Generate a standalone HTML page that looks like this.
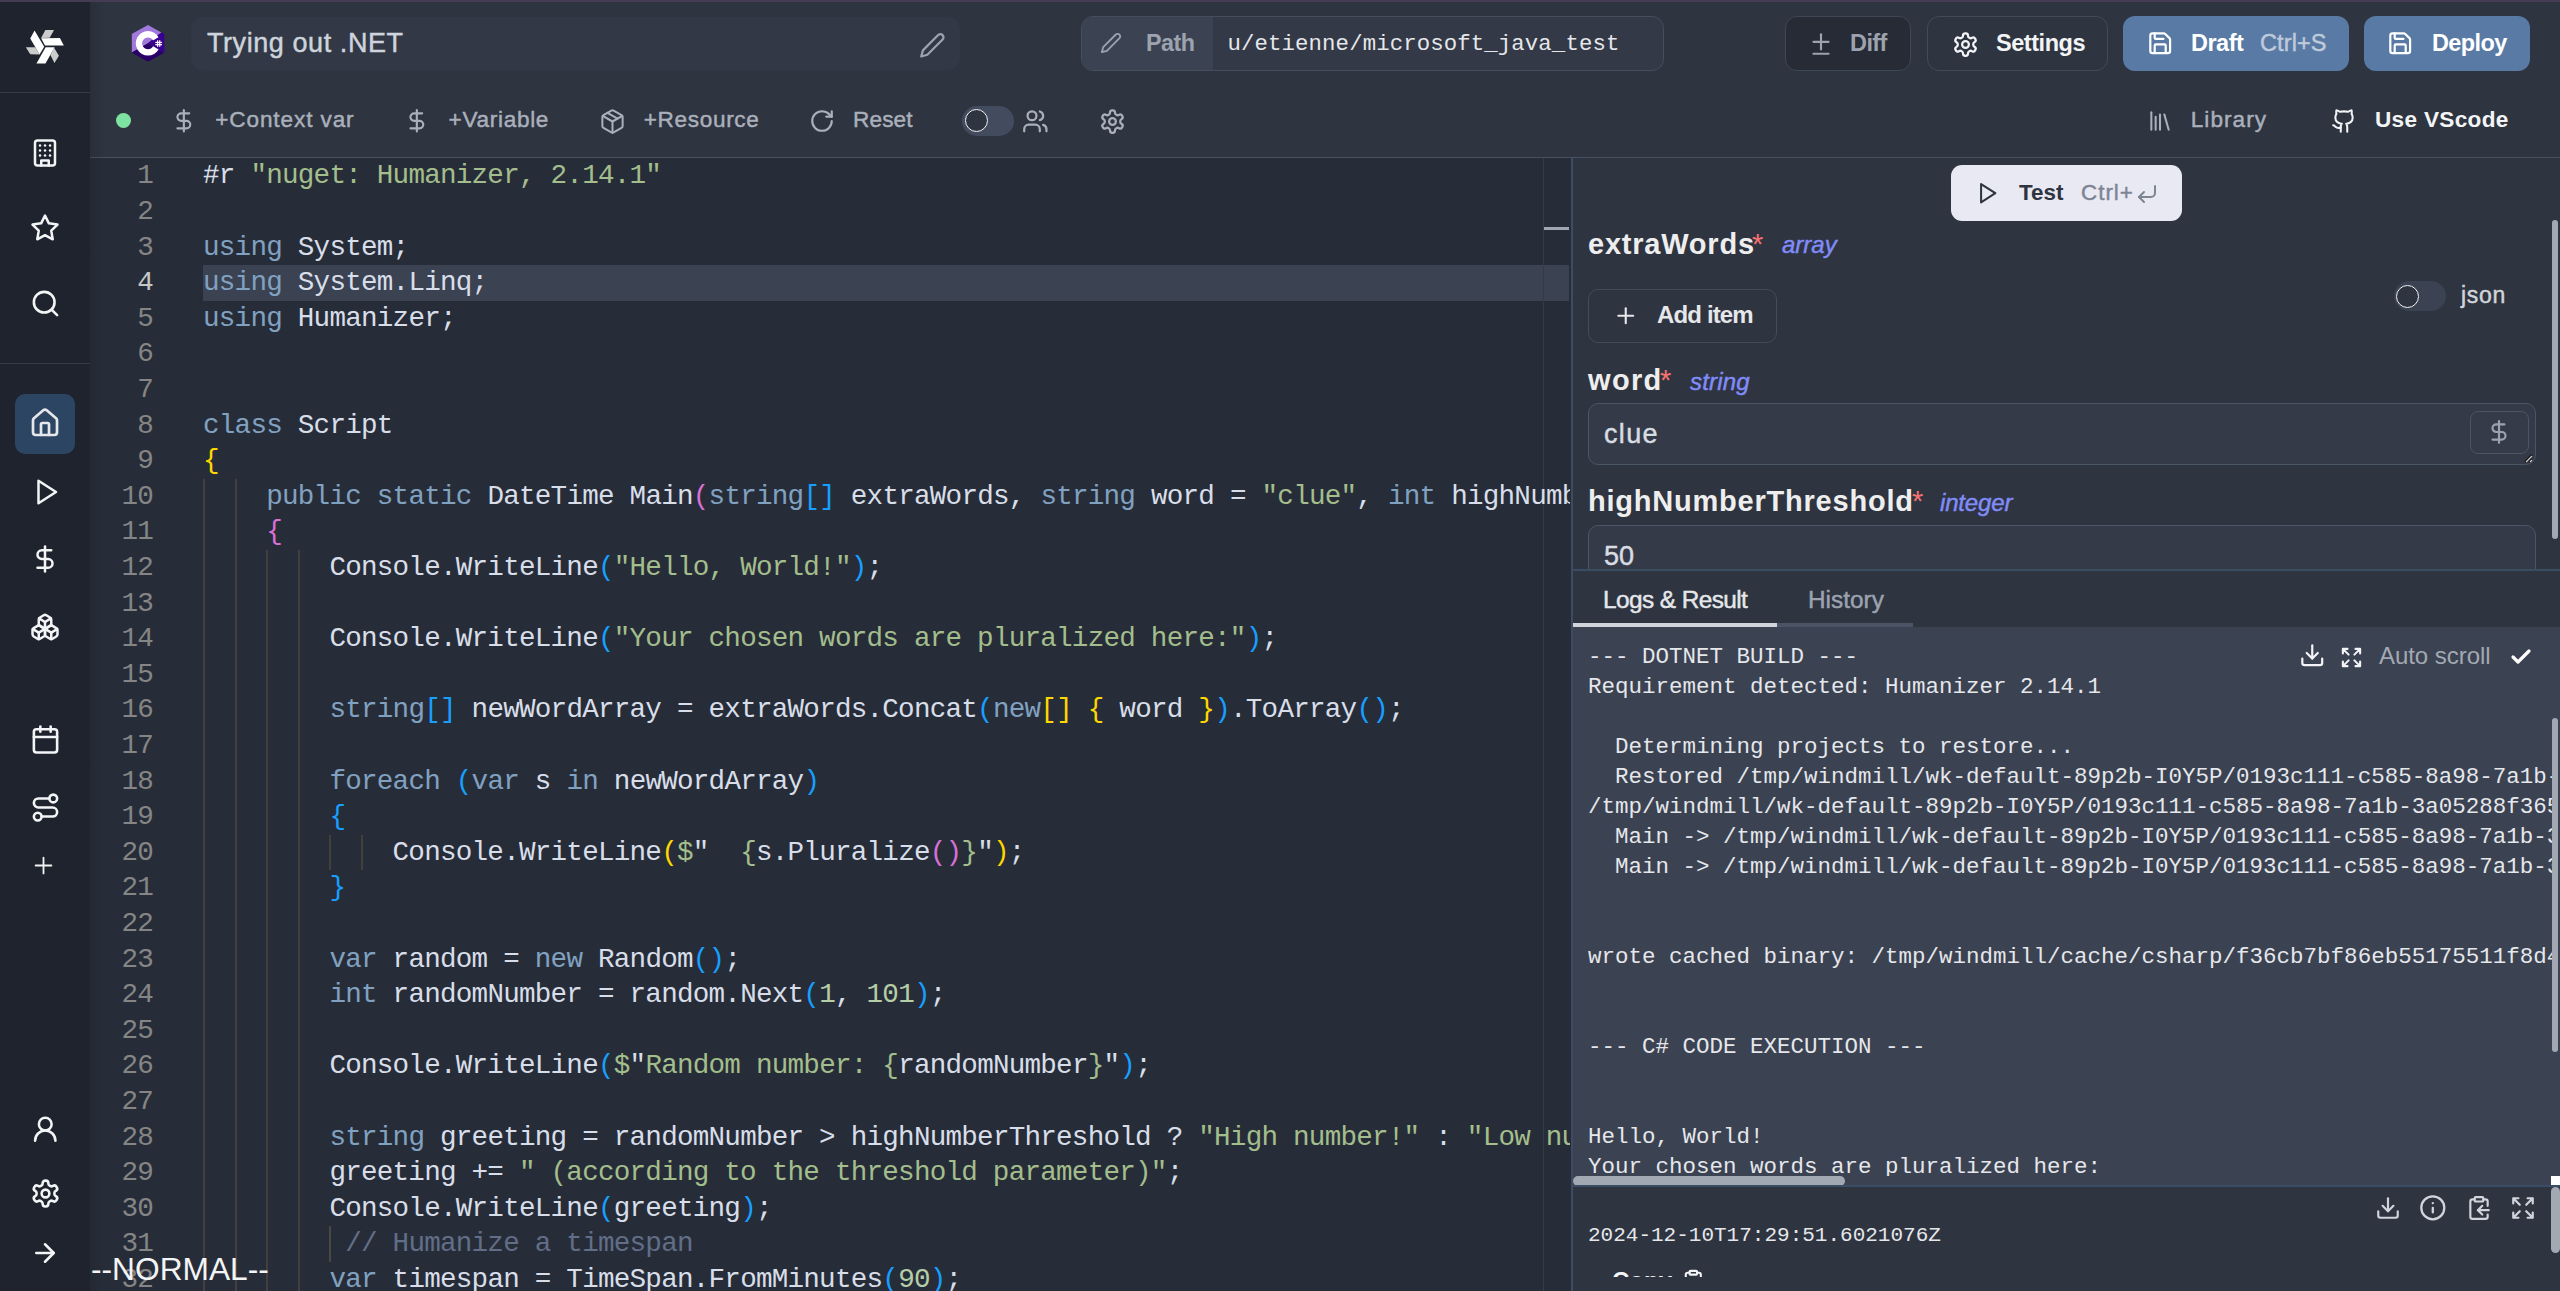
<!DOCTYPE html>
<html><head><meta charset="utf-8"><title>Windmill</title><style>
*{margin:0;padding:0;box-sizing:content-box}
html,body{width:2560px;height:1291px;overflow:hidden;background:#272d38}
body{position:relative;font-family:'Liberation Sans', sans-serif}
body div, body svg, body span.t{position:absolute}
.ln{left:90px;width:63px;text-align:right;font-family:'Liberation Mono', monospace;font-size:27.600px;letter-spacing:-0.762px;line-height:35.6px;white-space:pre}
.cl{left:203px;font-family:'Liberation Mono', monospace;font-size:27.600px;letter-spacing:-0.762px;line-height:35.6px;white-space:pre;width:1367px;overflow:hidden;height:35.6px}
.lg{left:15px;font-family:'Liberation Mono', monospace;font-size:22.5px;line-height:26.24px;white-space:pre;color:#e5e7eb}
</style></head>
<body>
<div style="left:0px;top:0px;width:90px;height:1291px;background:#1f232d"></div>
<div style="left:90px;top:0px;width:2470px;height:158px;background:#2e3440"></div>
<div style="left:0px;top:0px;width:2560px;height:2px;background:#453b52"></div>
<div style="left:90px;top:157px;width:2470px;height:1px;background:#465161"></div>
<div style="left:0px;top:92px;width:90px;height:1px;background:#343d4b"></div>
<div style="left:0px;top:363px;width:90px;height:1px;background:#343d4b"></div>
<div style="left:90px;top:158px;width:1481px;height:1133px;background:#272d38"></div>
<div style="left:1571px;top:158px;width:2px;height:1133px;background:#3b4d64"></div>
<div style="left:1573px;top:158px;width:987px;height:412px;background:#2e3440"></div>
<div style="left:90px;top:2px;width:14px;height:1289px;background:linear-gradient(to right, rgba(0,0,0,0.10), rgba(0,0,0,0))"></div>
<svg style="left:20px;top:21px;width:50px;height:50px" viewBox="0 0 1291 1291">
<g fill="#cccccc">
<polygon points="150,675 390,675 505,865 265,858"/>
<polygon points="655,235 878,235 768,432 545,442"/>
<polygon points="880,690 1005,895 890,1082 785,880"/>
</g>
<g fill="#ffffff">
<polygon points="375,245 625,667 505,865 265,450"/>
<polygon points="545,445 1030,440 1132,635 645,635"/>
<polygon points="662,675 892,675 658,1100 425,1100"/>
</g></svg>
<div style="left:15px;top:394px;width:60px;height:60px;background:#2c4563;border-radius:10px"></div>
<svg style="left:30.00px;top:138.00px;width:30px;height:30px;" viewBox="0 0 24 24" fill="none" stroke="#f3f4f6" stroke-width="2" stroke-linecap="round" stroke-linejoin="round"><rect width="16" height="20" x="4" y="2" rx="2" ry="2"/><path d="M9 22v-4h6v4"/><path d="M8 6h.01"/><path d="M16 6h.01"/><path d="M12 6h.01"/><path d="M12 10h.01"/><path d="M12 14h.01"/><path d="M16 10h.01"/><path d="M16 14h.01"/><path d="M8 10h.01"/><path d="M8 14h.01"/></svg>
<svg style="left:30.00px;top:213.00px;width:30px;height:30px;" viewBox="0 0 24 24" fill="none" stroke="#f3f4f6" stroke-width="2" stroke-linecap="round" stroke-linejoin="round"><polygon points="12 2 15.09 8.26 22 9.27 17 14.14 18.18 21.02 12 17.77 5.82 21.02 7 14.14 2 9.27 8.91 8.26 12 2"/></svg>
<svg style="left:29.50px;top:287.50px;width:31px;height:31px;" viewBox="0 0 24 24" fill="none" stroke="#f3f4f6" stroke-width="2" stroke-linecap="round" stroke-linejoin="round"><circle cx="11" cy="11" r="8"/><path d="m21 21-4.3-4.3"/></svg>
<svg style="left:29.00px;top:407.00px;width:32px;height:32px;" viewBox="0 0 24 24" fill="none" stroke="#e5e7eb" stroke-width="2" stroke-linecap="round" stroke-linejoin="round"><path d="M15 21v-8a1 1 0 0 0-1-1h-4a1 1 0 0 0-1 1v8"/><path d="M3 10a2 2 0 0 1 .709-1.528l7-5.999a2 2 0 0 1 2.582 0l7 5.999A2 2 0 0 1 21 10v9a2 2 0 0 1-2 2H5a2 2 0 0 1-2-2z"/></svg>
<svg style="left:31.00px;top:477.00px;width:30px;height:30px;" viewBox="0 0 24 24" fill="none" stroke="#f3f4f6" stroke-width="2" stroke-linecap="round" stroke-linejoin="round"><polygon points="6 3 20 12 6 21 6 3"/></svg>
<svg style="left:30.00px;top:544.00px;width:30px;height:30px;" viewBox="0 0 24 24" fill="none" stroke="#f3f4f6" stroke-width="2" stroke-linecap="round" stroke-linejoin="round"><line x1="12" x2="12" y1="2" y2="22"/><path d="M17 5H9.5a3.5 3.5 0 0 0 0 7h5a3.5 3.5 0 0 1 0 7H6"/></svg>
<svg style="left:30.00px;top:612.00px;width:30px;height:30px;" viewBox="0 0 24 24" fill="none" stroke="#f3f4f6" stroke-width="2" stroke-linecap="round" stroke-linejoin="round"><path d="M2.97 12.92A2 2 0 0 0 2 14.63v3.24a2 2 0 0 0 .97 1.71l3 1.8a2 2 0 0 0 2.06 0L12 19v-5.5l-5-3-4.03 2.42Z"/><path d="m7 16.5-4.74-2.85"/><path d="m7 16.5 5-3"/><path d="M7 16.5v5.17"/><path d="M12 13.5V19l3.97 2.38a2 2 0 0 0 2.06 0l3-1.8a2 2 0 0 0 .97-1.71v-3.24a2 2 0 0 0-.97-1.71L17 10.5l-5 3Z"/><path d="m17 16.5-5-3"/><path d="m17 16.5 4.74-2.85"/><path d="M17 16.5v5.17"/><path d="M7.970 4.42A2 2 0 0 0 7 6.13v4.37l5 3 5-3V6.13a2 2 0 0 0-.97-1.71l-3-1.8a2 2 0 0 0-2.06 0l-3 1.8Z"/><path d="M12 8 7.26 5.15"/><path d="m12 8 4.74-2.85"/><path d="M12 13.5V8"/></svg>
<svg style="left:29.50px;top:724.00px;width:31px;height:31px;" viewBox="0 0 24 24" fill="none" stroke="#f3f4f6" stroke-width="2" stroke-linecap="round" stroke-linejoin="round"><path d="M8 2v4"/><path d="M16 2v4"/><rect width="18" height="18" x="3" y="4" rx="2"/><path d="M3 10h18"/></svg>
<svg style="left:29.50px;top:791.50px;width:31px;height:31px;" viewBox="0 0 24 24" fill="none" stroke="#f3f4f6" stroke-width="2" stroke-linecap="round" stroke-linejoin="round"><circle cx="6" cy="19" r="3"/><path d="M9 19h8.5a3.5 3.5 0 0 0 0-7h-11a3.5 3.5 0 0 1 0-7H15"/><circle cx="18" cy="5" r="3"/></svg>
<svg style="left:29.50px;top:851.50px;width:27px;height:27px;" viewBox="0 0 24 24" fill="none" stroke="#f3f4f6" stroke-width="1.6" stroke-linecap="round" stroke-linejoin="round"><path d="M5 12h14"/><path d="M12 5v14"/></svg>
<svg style="left:29.75px;top:1113.75px;width:30.5px;height:30.5px;" viewBox="0 0 24 24" fill="none" stroke="#f3f4f6" stroke-width="2" stroke-linecap="round" stroke-linejoin="round"><circle cx="12" cy="8" r="5"/><path d="M20 21a8 8 0 0 0-16 0"/></svg>
<svg style="left:29.50px;top:1177.50px;width:31px;height:31px;" viewBox="0 0 24 24" fill="none" stroke="#f3f4f6" stroke-width="2" stroke-linecap="round" stroke-linejoin="round"><path d="M12.22 2h-.44a2 2 0 0 0-2 2v.18a2 2 0 0 1-1 1.73l-.43.25a2 2 0 0 1-2 0l-.15-.08a2 2 0 0 0-2.73.73l-.22.38a2 2 0 0 0 .73 2.73l.15.1a2 2 0 0 1 1 1.72v.51a2 2 0 0 1-1 1.74l-.15.09a2 2 0 0 0-.73 2.73l.22.38a2 2 0 0 0 2.73.73l.15-.08a2 2 0 0 1 2 0l.43.25a2 2 0 0 1 1 1.73V20a2 2 0 0 0 2 2h.44a2 2 0 0 0 2-2v-.18a2 2 0 0 1 1-1.73l.43-.25a2 2 0 0 1 2 0l.15.08a2 2 0 0 0 2.73-.73l.22-.39a2 2 0 0 0-.73-2.73l-.15-.08a2 2 0 0 1-1-1.74v-.5a2 2 0 0 1 1-1.74l.15-.09a2 2 0 0 0 .73-2.73l-.22-.38a2 2 0 0 0-2.73-.73l-.15.08a2 2 0 0 1-2 0l-.43-.25a2 2 0 0 1-1-1.73V4a2 2 0 0 0-2-2z"/><circle cx="12" cy="12" r="3"/></svg>
<svg style="left:30.00px;top:1238.00px;width:30px;height:30px;" viewBox="0 0 24 24" fill="none" stroke="#f3f4f6" stroke-width="2" stroke-linecap="round" stroke-linejoin="round"><path d="M5 12h14"/><path d="m12 5 7 7-7 7"/></svg>
<svg style="left:125px;top:20px;width:46px;height:46px" viewBox="0 0 1291 1291">
<defs><clipPath id="hx"><polygon points="645,140 1110,400 1110,910 645,1170 185,915 185,395"/></clipPath>
<mask id="cm"><rect width="1291" height="1291" fill="#fff"/><polygon points="645,655 1300,280 1300,1030" fill="#000"/></mask></defs>
<g clip-path="url(#hx)">
<polygon points="0,0 1291,0 1291,130 645,655 0,1020" fill="#a179dc"/>
<polygon points="1291,130 1291,1050 645,655" fill="#390091"/>
<polygon points="0,1020 645,655 1291,1050 1291,1291 0,1291" fill="#280068"/>
</g>
<path d="M645,312 a343,343 0 1,0 0.1,0 Z M645,490 a165,165 0 1,1 -0.1,0 Z" fill="#fff" fill-rule="evenodd" mask="url(#cm)"/>
<g stroke="#fff" stroke-width="34"><line x1="915" y1="570" x2="915" y2="752"/><line x1="975" y1="570" x2="975" y2="752"/><line x1="850" y1="630" x2="1040" y2="630"/><line x1="850" y1="692" x2="1040" y2="692"/></g>
</svg>
<div style="left:191px;top:17px;width:769px;height:53px;background:#323846;border-radius:12px"></div>
<span class="t" id="title" style="left:207.00px;top:27.77px;font-size:27px;line-height:30.16px;color:#ced3dc;font-weight:400;font-family:'Liberation Sans', sans-serif;letter-spacing:0.571px;white-space:pre;-webkit-text-stroke:0.45px currentColor;">Trying out .NET</span>
<svg style="left:918.65px;top:31.65px;width:26.7px;height:26.7px;" viewBox="0 0 24 24" fill="none" stroke="#9ca3af" stroke-width="2" stroke-linecap="round" stroke-linejoin="round"><path d="M17 3a2.85 2.83 0 1 1 4 4L7.5 20.5 2 22l1.5-5.5Z"/></svg>
<div style="left:1081px;top:16px;width:583px;height:55px;background:#333946;border:1px solid #464e5c;border-radius:12px;box-sizing:border-box"></div>
<div style="left:1082px;top:17px;width:131px;height:53px;background:#3b4252;border-radius:11px 0 0 11px"></div>
<svg style="left:1100.00px;top:32.00px;width:22px;height:22px;" viewBox="0 0 24 24" fill="none" stroke="#9ca3af" stroke-width="2" stroke-linecap="round" stroke-linejoin="round"><path d="M17 3a2.85 2.83 0 1 1 4 4L7.5 20.5 2 22l1.5-5.5Z"/></svg>
<span class="t" id="path" style="left:1146.00px;top:30.41px;font-size:23.3px;line-height:26.03px;color:#9ca3af;font-weight:700;font-family:'Liberation Sans', sans-serif;letter-spacing:-0.533px;white-space:pre;">Path</span>
<span class="t" id="pathv" style="left:1227.50px;top:32.08px;font-size:22.35px;line-height:25.32px;color:#e5e7eb;font-weight:400;font-family:'Liberation Mono', monospace;letter-spacing:0.107px;white-space:pre;">u/etienne/microsoft_java_test</span>
<div style="left:1785px;top:16px;width:126px;height:55px;background:#262b35;border:1px solid #3f4655;border-radius:12px;box-sizing:border-box"></div>
<svg style="left:1808.00px;top:31.00px;width:26px;height:26px;" viewBox="0 0 24 24" fill="none" stroke="#9ca3af" stroke-width="2" stroke-linecap="round" stroke-linejoin="round"><path d="M12 3v14"/><path d="M5 10h14"/><path d="M5 21h14"/></svg>
<span class="t" id="diff" style="left:1850.00px;top:30.03px;font-size:23.5px;line-height:26.25px;color:#9ca3af;font-weight:700;font-family:'Liberation Sans', sans-serif;letter-spacing:-0.567px;white-space:pre;">Diff</span>
<div style="left:1927px;top:16px;width:181px;height:55px;border:1px solid #434a58;border-radius:12px;box-sizing:border-box"></div>
<svg style="left:1951.50px;top:30.50px;width:27px;height:27px;" viewBox="0 0 24 24" fill="none" stroke="#f3f4f6" stroke-width="2" stroke-linecap="round" stroke-linejoin="round"><path d="M12.22 2h-.44a2 2 0 0 0-2 2v.18a2 2 0 0 1-1 1.73l-.43.25a2 2 0 0 1-2 0l-.15-.08a2 2 0 0 0-2.73.73l-.22.38a2 2 0 0 0 .73 2.73l.15.1a2 2 0 0 1 1 1.72v.51a2 2 0 0 1-1 1.74l-.15.09a2 2 0 0 0-.73 2.73l.22.38a2 2 0 0 0 2.73.73l.15-.08a2 2 0 0 1 2 0l.43.25a2 2 0 0 1 1 1.73V20a2 2 0 0 0 2 2h.44a2 2 0 0 0 2-2v-.18a2 2 0 0 1 1-1.73l.43-.25a2 2 0 0 1 2 0l.15.08a2 2 0 0 0 2.73-.73l.22-.39a2 2 0 0 0-.73-2.73l-.15-.08a2 2 0 0 1-1-1.74v-.5a2 2 0 0 1 1-1.74l.15-.09a2 2 0 0 0 .73-2.73l-.22-.38a2 2 0 0 0-2.73-.73l-.15.08a2 2 0 0 1-2 0l-.43-.25a2 2 0 0 1-1-1.73V4a2 2 0 0 0-2-2z"/><circle cx="12" cy="12" r="3"/></svg>
<span class="t" id="settings" style="left:1996.00px;top:30.03px;font-size:23.5px;line-height:26.25px;color:#f3f4f6;font-weight:700;font-family:'Liberation Sans', sans-serif;letter-spacing:-0.457px;white-space:pre;">Settings</span>
<div style="left:2123px;top:16px;width:226px;height:55px;background:#587aa5;border-radius:12px"></div>
<svg style="left:2146.80px;top:30.30px;width:26.4px;height:26.4px;" viewBox="0 0 24 24" fill="none" stroke="#ffffff" stroke-width="2" stroke-linecap="round" stroke-linejoin="round"><path d="M15.2 3a2 2 0 0 1 1.4.6l3.8 3.8a2 2 0 0 1 .6 1.4V19a2 2 0 0 1-2 2H5a2 2 0 0 1-2-2V5a2 2 0 0 1 2-2z"/><path d="M17 21v-7a1 1 0 0 0-1-1H8a1 1 0 0 0-1 1v7"/><path d="M7 3v4a1 1 0 0 0 1 1h7"/></svg>
<span class="t" id="draft" style="left:2191.00px;top:30.03px;font-size:23.5px;line-height:26.25px;color:#ffffff;font-weight:700;font-family:'Liberation Sans', sans-serif;letter-spacing:-0.500px;white-space:pre;">Draft</span>
<span class="t" id="ctrls" style="left:2260.00px;top:30.03px;font-size:23.5px;line-height:26.25px;color:#bfcadb;font-weight:400;font-family:'Liberation Sans', sans-serif;letter-spacing:0.100px;white-space:pre;-webkit-text-stroke:0.45px currentColor;">Ctrl+S</span>
<div style="left:2364px;top:16px;width:166px;height:55px;background:#587aa5;border-radius:12px"></div>
<svg style="left:2386.80px;top:30.30px;width:26.4px;height:26.4px;" viewBox="0 0 24 24" fill="none" stroke="#ffffff" stroke-width="2" stroke-linecap="round" stroke-linejoin="round"><path d="M15.2 3a2 2 0 0 1 1.4.6l3.8 3.8a2 2 0 0 1 .6 1.4V19a2 2 0 0 1-2 2H5a2 2 0 0 1-2-2V5a2 2 0 0 1 2-2z"/><path d="M17 21v-7a1 1 0 0 0-1-1H8a1 1 0 0 0-1 1v7"/><path d="M7 3v4a1 1 0 0 0 1 1h7"/></svg>
<span class="t" id="deploy" style="left:2432.00px;top:30.03px;font-size:23.5px;line-height:26.25px;color:#ffffff;font-weight:700;font-family:'Liberation Sans', sans-serif;letter-spacing:-0.600px;white-space:pre;">Deploy</span>
<div style="left:116px;top:113px;width:15px;height:15px;border-radius:50%;background:#7ee2a2"></div>
<svg style="left:171.15px;top:108.15px;width:25.7px;height:25.7px;" viewBox="0 0 24 24" fill="none" stroke="#aab0bb" stroke-width="2" stroke-linecap="round" stroke-linejoin="round"><line x1="12" x2="12" y1="2" y2="22"/><path d="M17 5H9.5a3.5 3.5 0 0 0 0 7h5a3.5 3.5 0 0 1 0 7H6"/></svg>
<span class="t" id="ctx" style="left:215.20px;top:107.25px;font-size:22.6px;line-height:25.24px;color:#aab0bb;font-weight:400;font-family:'Liberation Sans', sans-serif;letter-spacing:0.882px;white-space:pre;-webkit-text-stroke:0.45px currentColor;">+Context var</span>
<svg style="left:404.15px;top:108.15px;width:25.7px;height:25.7px;" viewBox="0 0 24 24" fill="none" stroke="#aab0bb" stroke-width="2" stroke-linecap="round" stroke-linejoin="round"><line x1="12" x2="12" y1="2" y2="22"/><path d="M17 5H9.5a3.5 3.5 0 0 0 0 7h5a3.5 3.5 0 0 1 0 7H6"/></svg>
<span class="t" id="var" style="left:448.60px;top:107.25px;font-size:22.6px;line-height:25.24px;color:#aab0bb;font-weight:400;font-family:'Liberation Sans', sans-serif;letter-spacing:0.675px;white-space:pre;-webkit-text-stroke:0.45px currentColor;">+Variable</span>
<svg style="left:598.50px;top:107.50px;width:27px;height:27px;" viewBox="0 0 24 24" fill="none" stroke="#aab0bb" stroke-width="1.8" stroke-linecap="round" stroke-linejoin="round"><path d="m7.5 4.27 9 5.15"/><path d="M21 8a2 2 0 0 0-1-1.73l-7-4a2 2 0 0 0-2 0l-7 4A2 2 0 0 0 3 8v8a2 2 0 0 0 1 1.73l7 4a2 2 0 0 0 2 0l7-4A2 2 0 0 0 21 16Z"/><path d="m3.3 7 8.7 5 8.7-5"/><path d="M12 22V12"/></svg>
<span class="t" id="res" style="left:643.75px;top:107.25px;font-size:22.6px;line-height:25.24px;color:#aab0bb;font-weight:400;font-family:'Liberation Sans', sans-serif;letter-spacing:0.656px;white-space:pre;-webkit-text-stroke:0.45px currentColor;">+Resource</span>
<svg style="left:809.00px;top:108.00px;width:26px;height:26px;" viewBox="0 0 24 24" fill="none" stroke="#aab0bb" stroke-width="2" stroke-linecap="round" stroke-linejoin="round"><path d="M21 12a9 9 0 1 1-9-9c2.52 0 4.93 1 6.74 2.74L21 8"/><path d="M21 3v5h-5"/></svg>
<span class="t" id="reset" style="left:853.00px;top:107.25px;font-size:22.6px;line-height:25.24px;color:#aab0bb;font-weight:400;font-family:'Liberation Sans', sans-serif;letter-spacing:0.125px;white-space:pre;-webkit-text-stroke:0.45px currentColor;">Reset</span>
<div style="left:962px;top:106px;width:52px;height:30px;background:#434c5e;border-radius:15px"></div>
<div style="left:965px;top:109px;width:21px;height:21px;border-radius:50%;border:1.5px solid #f3f4f6;background:#2e3440"></div>
<svg style="left:1021.65px;top:107.65px;width:26.7px;height:26.7px;" viewBox="0 0 24 24" fill="none" stroke="#aab0bb" stroke-width="2" stroke-linecap="round" stroke-linejoin="round"><path d="M16 21v-2a4 4 0 0 0-4-4H6a4 4 0 0 0-4 4v2"/><circle cx="9" cy="7" r="4"/><path d="M22 21v-2a4 4 0 0 0-3-3.87"/><path d="M16 3.13a4 4 0 0 1 0 7.75"/></svg>
<svg style="left:1098.50px;top:107.50px;width:27px;height:27px;" viewBox="0 0 24 24" fill="none" stroke="#aab0bb" stroke-width="2" stroke-linecap="round" stroke-linejoin="round"><path d="M12.22 2h-.44a2 2 0 0 0-2 2v.18a2 2 0 0 1-1 1.73l-.43.25a2 2 0 0 1-2 0l-.15-.08a2 2 0 0 0-2.73.73l-.22.38a2 2 0 0 0 .73 2.73l.15.1a2 2 0 0 1 1 1.72v.51a2 2 0 0 1-1 1.74l-.15.09a2 2 0 0 0-.73 2.73l.22.38a2 2 0 0 0 2.73.73l.15-.08a2 2 0 0 1 2 0l.43.25a2 2 0 0 1 1 1.73V20a2 2 0 0 0 2 2h.44a2 2 0 0 0 2-2v-.18a2 2 0 0 1 1-1.73l.43-.25a2 2 0 0 1 2 0l.15.08a2 2 0 0 0 2.73-.73l.22-.39a2 2 0 0 0-.73-2.73l-.15-.08a2 2 0 0 1-1-1.74v-.5a2 2 0 0 1 1-1.74l.15-.09a2 2 0 0 0 .73-2.73l-.22-.38a2 2 0 0 0-2.73-.73l-.15.08a2 2 0 0 1-2 0l-.43-.25a2 2 0 0 1-1-1.73V4a2 2 0 0 0-2-2z"/><circle cx="12" cy="12" r="3"/></svg>
<svg style="left:2147.00px;top:108.00px;width:26px;height:26px;" viewBox="0 0 24 24" fill="none" stroke="#aab0bb" stroke-width="1.9" stroke-linecap="round" stroke-linejoin="round"><path d="m16 6 4 14"/><path d="M12 6v14"/><path d="M8 8v12"/><path d="M4 4v16"/></svg>
<span class="t" id="lib" style="left:2190.75px;top:107.25px;font-size:22.6px;line-height:25.24px;color:#aab0bb;font-weight:400;font-family:'Liberation Sans', sans-serif;letter-spacing:1.042px;white-space:pre;-webkit-text-stroke:0.45px currentColor;">Library</span>
<svg style="left:2330.50px;top:108.00px;width:26px;height:26px;" viewBox="0 0 24 24" fill="none" stroke="#f3f4f6" stroke-width="1.9" stroke-linecap="round" stroke-linejoin="round"><path d="M15 22v-4a4.8 4.8 0 0 0-1-3.5c3 0 6-2 6-5.5.08-1.25-.27-2.48-1-3.5.28-1.15.28-2.35 0-3.5 0 0-1 0-3 1.5-2.64-.5-5.36-.5-8 0C6 2 5 2 5 2c-.3 1.150-.3 2.35 0 3.5A5.403 5.403 0 0 0 4 9c0 3.5 3 5.5 6 5.5-.39.49-.68 1.05-.85 1.65-.17.6-.22 1.23-.15 1.850v4"/><path d="M9 18c-4.51 2-5-2-7-2"/></svg>
<span class="t" id="vscode" style="left:2375.00px;top:107.25px;font-size:22.6px;line-height:25.24px;color:#f3f4f6;font-weight:700;font-family:'Liberation Sans', sans-serif;letter-spacing:0.306px;white-space:pre;">Use VScode</span>
<div style="left:203px;top:265.20000000000005px;width:1366px;height:35.6px;background:#3b4252"></div>
<div style="left:1543px;top:158px;width:1px;height:1133px;background:#343a46"></div>
<div style="left:1544px;top:227px;width:25px;height:3px;background:#a0a7b4"></div>
<div style="left:203px;top:478.80000000000007px;width:1.5px;height:818.8000000000001px;background:#433f3d"></div>
<div style="left:235px;top:478.80000000000007px;width:1.5px;height:818.8000000000001px;background:#433f3d"></div>
<div style="left:266px;top:550.0px;width:1.5px;height:747.6px;background:#433f3d"></div>
<div style="left:298px;top:550.0px;width:1.5px;height:747.6px;background:#433f3d"></div>
<div style="left:329px;top:834.8px;width:1.5px;height:35.6px;background:#433f3d"></div>
<div style="left:361px;top:834.8px;width:1.5px;height:35.6px;background:#433f3d"></div>
<div style="left:329px;top:1226.4px;width:1.5px;height:35.6px;background:#4a4744"></div>
<div class="ln" style="top:158.40px;color:#858585">1</div>
<div class="cl" style="top:158.40px"><span style="color:#d8dee9">#r </span><span style="color:#a3be8c">&quot;nuget: Humanizer, 2.14.1&quot;</span></div>
<div class="ln" style="top:194.00px;color:#858585">2</div>
<div class="ln" style="top:229.60px;color:#858585">3</div>
<div class="cl" style="top:229.60px"><span style="color:#81a1c1">using</span><span style="color:#d8dee9"> System;</span></div>
<div class="ln" style="top:265.20px;color:#c6c6c6">4</div>
<div class="cl" style="top:265.20px"><span style="color:#81a1c1">using</span><span style="color:#d8dee9"> System.Linq;</span></div>
<div class="ln" style="top:300.80px;color:#858585">5</div>
<div class="cl" style="top:300.80px"><span style="color:#81a1c1">using</span><span style="color:#d8dee9"> Humanizer;</span></div>
<div class="ln" style="top:336.40px;color:#858585">6</div>
<div class="ln" style="top:372.00px;color:#858585">7</div>
<div class="ln" style="top:407.60px;color:#858585">8</div>
<div class="cl" style="top:407.60px"><span style="color:#81a1c1">class</span><span style="color:#d8dee9"> Script</span></div>
<div class="ln" style="top:443.20px;color:#858585">9</div>
<div class="cl" style="top:443.20px"><span style="color:#ffd700">{</span></div>
<div class="ln" style="top:478.80px;color:#858585">10</div>
<div class="cl" style="top:478.80px"><span style="color:#d8dee9">    </span><span style="color:#81a1c1">public</span><span style="color:#d8dee9"> </span><span style="color:#81a1c1">static</span><span style="color:#d8dee9"> DateTime Main</span><span style="color:#da70d6">(</span><span style="color:#81a1c1">string</span><span style="color:#179fff">[]</span><span style="color:#d8dee9"> extraWords, </span><span style="color:#81a1c1">string</span><span style="color:#d8dee9"> word = </span><span style="color:#a3be8c">&quot;clue&quot;</span><span style="color:#d8dee9">, </span><span style="color:#81a1c1">int</span><span style="color:#d8dee9"> highNumberThreshold = </span><span style="color:#b5cea8">50</span><span style="color:#da70d6">)</span></div>
<div class="ln" style="top:514.40px;color:#858585">11</div>
<div class="cl" style="top:514.40px"><span style="color:#d8dee9">    </span><span style="color:#da70d6">{</span></div>
<div class="ln" style="top:550.00px;color:#858585">12</div>
<div class="cl" style="top:550.00px"><span style="color:#d8dee9">        Console.WriteLine</span><span style="color:#179fff">(</span><span style="color:#a3be8c">&quot;Hello, World!&quot;</span><span style="color:#179fff">)</span><span style="color:#d8dee9">;</span></div>
<div class="ln" style="top:585.60px;color:#858585">13</div>
<div class="ln" style="top:621.20px;color:#858585">14</div>
<div class="cl" style="top:621.20px"><span style="color:#d8dee9">        Console.WriteLine</span><span style="color:#179fff">(</span><span style="color:#a3be8c">&quot;Your chosen words are pluralized here:&quot;</span><span style="color:#179fff">)</span><span style="color:#d8dee9">;</span></div>
<div class="ln" style="top:656.80px;color:#858585">15</div>
<div class="ln" style="top:692.40px;color:#858585">16</div>
<div class="cl" style="top:692.40px"><span style="color:#d8dee9">        </span><span style="color:#81a1c1">string</span><span style="color:#179fff">[]</span><span style="color:#d8dee9"> newWordArray = extraWords.Concat</span><span style="color:#179fff">(</span><span style="color:#81a1c1">new</span><span style="color:#ffd700">[]</span><span style="color:#d8dee9"> </span><span style="color:#ffd700">{</span><span style="color:#d8dee9"> word </span><span style="color:#ffd700">}</span><span style="color:#179fff">)</span><span style="color:#d8dee9">.ToArray</span><span style="color:#179fff">()</span><span style="color:#d8dee9">;</span></div>
<div class="ln" style="top:728.00px;color:#858585">17</div>
<div class="ln" style="top:763.60px;color:#858585">18</div>
<div class="cl" style="top:763.60px"><span style="color:#d8dee9">        </span><span style="color:#81a1c1">foreach</span><span style="color:#d8dee9"> </span><span style="color:#179fff">(</span><span style="color:#81a1c1">var</span><span style="color:#d8dee9"> s </span><span style="color:#81a1c1">in</span><span style="color:#d8dee9"> newWordArray</span><span style="color:#179fff">)</span></div>
<div class="ln" style="top:799.20px;color:#858585">19</div>
<div class="cl" style="top:799.20px"><span style="color:#d8dee9">        </span><span style="color:#179fff">{</span></div>
<div class="ln" style="top:834.80px;color:#858585">20</div>
<div class="cl" style="top:834.80px"><span style="color:#d8dee9">            Console.WriteLine</span><span style="color:#ffd700">(</span><span style="color:#a3be8c">$</span><span style="color:#d8dee9">&quot;</span><span style="color:#a3be8c">  {</span><span style="color:#d8dee9">s.Pluralize</span><span style="color:#da70d6">()</span><span style="color:#a3be8c">}</span><span style="color:#d8dee9">&quot;</span><span style="color:#ffd700">)</span><span style="color:#d8dee9">;</span></div>
<div class="ln" style="top:870.40px;color:#858585">21</div>
<div class="cl" style="top:870.40px"><span style="color:#d8dee9">        </span><span style="color:#179fff">}</span></div>
<div class="ln" style="top:906.00px;color:#858585">22</div>
<div class="ln" style="top:941.60px;color:#858585">23</div>
<div class="cl" style="top:941.60px"><span style="color:#d8dee9">        </span><span style="color:#81a1c1">var</span><span style="color:#d8dee9"> random = </span><span style="color:#81a1c1">new</span><span style="color:#d8dee9"> Random</span><span style="color:#179fff">()</span><span style="color:#d8dee9">;</span></div>
<div class="ln" style="top:977.20px;color:#858585">24</div>
<div class="cl" style="top:977.20px"><span style="color:#d8dee9">        </span><span style="color:#81a1c1">int</span><span style="color:#d8dee9"> randomNumber = random.Next</span><span style="color:#179fff">(</span><span style="color:#b5cea8">1</span><span style="color:#d8dee9">, </span><span style="color:#b5cea8">101</span><span style="color:#179fff">)</span><span style="color:#d8dee9">;</span></div>
<div class="ln" style="top:1012.80px;color:#858585">25</div>
<div class="ln" style="top:1048.40px;color:#858585">26</div>
<div class="cl" style="top:1048.40px"><span style="color:#d8dee9">        Console.WriteLine</span><span style="color:#179fff">(</span><span style="color:#a3be8c">$</span><span style="color:#d8dee9">&quot;</span><span style="color:#a3be8c">Random number: {</span><span style="color:#d8dee9">randomNumber</span><span style="color:#a3be8c">}</span><span style="color:#d8dee9">&quot;</span><span style="color:#179fff">)</span><span style="color:#d8dee9">;</span></div>
<div class="ln" style="top:1084.00px;color:#858585">27</div>
<div class="ln" style="top:1119.60px;color:#858585">28</div>
<div class="cl" style="top:1119.60px"><span style="color:#d8dee9">        </span><span style="color:#81a1c1">string</span><span style="color:#d8dee9"> greeting = randomNumber &gt; highNumberThreshold ? </span><span style="color:#a3be8c">&quot;High number!&quot;</span><span style="color:#d8dee9"> : </span><span style="color:#a3be8c">&quot;Low number!&quot;</span><span style="color:#d8dee9">;</span></div>
<div class="ln" style="top:1155.20px;color:#858585">29</div>
<div class="cl" style="top:1155.20px"><span style="color:#d8dee9">        greeting += </span><span style="color:#a3be8c">&quot; (according to the threshold parameter)&quot;</span><span style="color:#d8dee9">;</span></div>
<div class="ln" style="top:1190.80px;color:#858585">30</div>
<div class="cl" style="top:1190.80px"><span style="color:#d8dee9">        Console.WriteLine</span><span style="color:#179fff">(</span><span style="color:#d8dee9">greeting</span><span style="color:#179fff">)</span><span style="color:#d8dee9">;</span></div>
<div class="ln" style="top:1226.40px;color:#858585">31</div>
<div class="cl" style="top:1226.40px"><span style="color:#d8dee9">         </span><span style="color:#616e88">// Humanize a timespan</span></div>
<div class="ln" style="top:1262.00px;color:#858585">32</div>
<div class="cl" style="top:1262.00px"><span style="color:#d8dee9">        </span><span style="color:#81a1c1">var</span><span style="color:#d8dee9"> timespan = TimeSpan.FromMinutes</span><span style="color:#179fff">(</span><span style="color:#b5cea8">90</span><span style="color:#179fff">)</span><span style="color:#d8dee9">;</span></div>
<div class="t" style="left:91px;top:1251px;font-size:31.7px;line-height:36px;color:#f3f4f6;font-family:'Liberation Sans', sans-serif;letter-spacing:0px;white-space:pre" id="normal">--NORMAL--</div>
<div style="left:1951px;top:165px;width:231px;height:56px;background:#e9e9f3;border-radius:11px"></div>
<svg style="left:1974.80px;top:181.30px;width:24.4px;height:24.4px;" viewBox="0 0 24 24" fill="none" stroke="#2e3440" stroke-width="2" stroke-linecap="round" stroke-linejoin="round"><polygon points="6 3 20 12 6 21 6 3"/></svg>
<span class="t" id="test" style="left:2019.00px;top:179.93px;font-size:22.4px;line-height:25.02px;color:#2e3440;font-weight:700;font-family:'Liberation Sans', sans-serif;letter-spacing:0.000px;white-space:pre;">Test</span>
<span class="t" id="ctrlp" style="left:2081.00px;top:179.93px;font-size:22.4px;line-height:25.02px;color:#7d8593;font-weight:400;font-family:'Liberation Sans', sans-serif;letter-spacing:1.000px;white-space:pre;-webkit-text-stroke:0.45px currentColor;">Ctrl+</span>
<svg style="left:2135.00px;top:182.00px;width:24px;height:24px;" viewBox="0 0 24 24" fill="none" stroke="#7d8593" stroke-width="2" stroke-linecap="round" stroke-linejoin="round"><polyline points="9 10 4 15 9 20"/><path d="M20 4v7a4 4 0 0 1-4 4H4"/></svg>
<span class="t" id="xw" style="left:1588.00px;top:227.50px;font-size:29px;line-height:32.39px;color:#eeeeee;font-weight:700;font-family:'Liberation Sans', sans-serif;letter-spacing:0.778px;white-space:pre;">extraWords</span>
<span class="t" id="xw_s" style="left:1752.00px;top:227.50px;font-size:29px;line-height:32.39px;color:#f87171;font-weight:400;font-family:'Liberation Sans', sans-serif;letter-spacing:0.000px;white-space:pre;">*</span>
<span class="t" id="xw_t" style="left:1782.00px;top:232.03px;font-size:24px;line-height:26.81px;color:#818cf8;font-weight:400;font-family:'Liberation Sans', sans-serif;letter-spacing:0.000px;white-space:pre;font-style:italic;-webkit-text-stroke:0.45px currentColor;">array</span>
<div style="left:1588px;top:289px;width:189px;height:54px;border:1px solid #444b59;border-radius:10px;box-sizing:border-box"></div>
<svg style="left:1613.25px;top:302.75px;width:25.5px;height:25.5px;" viewBox="0 0 24 24" fill="none" stroke="#e5e7eb" stroke-width="2" stroke-linecap="round" stroke-linejoin="round"><path d="M5 12h14"/><path d="M12 5v14"/></svg>
<span class="t" id="additem" style="left:1657.00px;top:302.28px;font-size:24px;line-height:26.81px;color:#e5e7eb;font-weight:700;font-family:'Liberation Sans', sans-serif;letter-spacing:-0.857px;white-space:pre;">Add item</span>
<div style="left:2394px;top:281px;width:52px;height:30px;background:#3b4252;border-radius:15px"></div>
<div style="left:2396px;top:284.5px;width:23px;height:23px;border-radius:50%;border:1.5px solid #f3f4f6;background:#2e3440;box-sizing:border-box"></div>
<span class="t" id="json" style="left:2461.00px;top:282.58px;font-size:23px;line-height:25.69px;color:#d1d5db;font-weight:400;font-family:'Liberation Sans', sans-serif;letter-spacing:0.667px;white-space:pre;-webkit-text-stroke:0.45px currentColor;">json</span>
<span class="t" id="wd" style="left:1588.00px;top:364.25px;font-size:29px;line-height:32.39px;color:#eeeeee;font-weight:700;font-family:'Liberation Sans', sans-serif;letter-spacing:1.333px;white-space:pre;">word</span>
<span class="t" id="wd_s" style="left:1660.00px;top:364.25px;font-size:29px;line-height:32.39px;color:#f87171;font-weight:400;font-family:'Liberation Sans', sans-serif;letter-spacing:0.000px;white-space:pre;">*</span>
<span class="t" id="wd_t" style="left:1690.00px;top:368.78px;font-size:24px;line-height:26.81px;color:#818cf8;font-weight:400;font-family:'Liberation Sans', sans-serif;letter-spacing:0.200px;white-space:pre;font-style:italic;-webkit-text-stroke:0.45px currentColor;">string</span>
<div style="left:1588px;top:403px;width:948px;height:62px;background:#343a47;border:1px solid #4a5566;border-radius:10px;box-sizing:border-box"></div>
<span class="t" id="clue" style="left:1604.00px;top:418.76px;font-size:27px;line-height:30.16px;color:#d8dce3;font-weight:400;font-family:'Liberation Sans', sans-serif;letter-spacing:1.333px;white-space:pre;-webkit-text-stroke:0.45px currentColor;">clue</span>
<div style="left:2470px;top:411px;width:59px;height:43px;background:#353b48;border:1px solid #4a5566;border-radius:8px;box-sizing:border-box"></div>
<svg style="left:2486.00px;top:419.00px;width:26px;height:26px;" viewBox="0 0 24 24" fill="none" stroke="#9ca3af" stroke-width="2" stroke-linecap="round" stroke-linejoin="round"><line x1="12" x2="12" y1="2" y2="22"/><path d="M17 5H9.5a3.5 3.5 0 0 0 0 7h5a3.5 3.5 0 0 1 0 7H6"/></svg>
<svg style="left:2524px;top:454px;width:10px;height:10px" viewBox="0 0 10 10"><path d="M1,8 L8,1 M5,8 L8,5" stroke="#111" stroke-width="2.2"/><path d="M2,8 L8,2 M6,8 L8,6" stroke="#ccc" stroke-width="1.2"/></svg>
<span class="t" id="hn" style="left:1588.00px;top:485.36px;font-size:29px;line-height:32.39px;color:#eeeeee;font-weight:700;font-family:'Liberation Sans', sans-serif;letter-spacing:0.778px;white-space:pre;">highNumberThreshold</span>
<span class="t" id="hn_s" style="left:1912.00px;top:485.36px;font-size:29px;line-height:32.39px;color:#f87171;font-weight:400;font-family:'Liberation Sans', sans-serif;letter-spacing:0.000px;white-space:pre;">*</span>
<span class="t" id="hn_t" style="left:1940.00px;top:489.88px;font-size:24px;line-height:26.81px;color:#818cf8;font-weight:400;font-family:'Liberation Sans', sans-serif;letter-spacing:-0.167px;white-space:pre;font-style:italic;-webkit-text-stroke:0.45px currentColor;">integer</span>
<div style="left:1588px;top:525px;width:948px;height:62px;background:#343a47;border:1px solid #4a5566;border-radius:10px;box-sizing:border-box"></div>
<span class="t" id="fifty" style="left:1604.00px;top:540.57px;font-size:27px;line-height:30.16px;color:#d8dce3;font-weight:400;font-family:'Liberation Sans', sans-serif;letter-spacing:0.000px;white-space:pre;-webkit-text-stroke:0.45px currentColor;">50</span>
<div style="left:2552px;top:220px;width:6px;height:319px;background:#a3a9b3;border-radius:3px"></div>
<div style="left:1573px;top:569px;width:987px;height:2px;background:#3b4d64"></div>
<div style="left:1573px;top:571px;width:987px;height:56px;background:#2e3440"></div>
<span class="t" id="logs" style="left:1603.00px;top:586.32px;font-size:24.4px;line-height:27.25px;color:#e5e7eb;font-weight:400;font-family:'Liberation Sans', sans-serif;letter-spacing:-0.583px;white-space:pre;-webkit-text-stroke:0.45px currentColor;">Logs &amp; Result</span>
<span class="t" id="hist" style="left:1808.00px;top:586.32px;font-size:24.4px;line-height:27.25px;color:#9ca3af;font-weight:400;font-family:'Liberation Sans', sans-serif;letter-spacing:0.000px;white-space:pre;-webkit-text-stroke:0.45px currentColor;">History</span>
<div style="left:1573px;top:623px;width:204px;height:3.5px;background:#d1d5db"></div>
<div style="left:1777px;top:623px;width:136px;height:3.5px;background:#4b5364"></div>
<div style="left:1573px;top:627px;width:987px;height:559px;background:#3b4252"></div>
<div style="left:1573px;top:627px;width:979px;height:549px;overflow:hidden">
<div class="lg" style="top:17.19px">--- DOTNET BUILD ---</div>
<div class="lg" style="top:47.19px">Requirement detected: Humanizer 2.14.1</div>
<div class="lg" style="top:107.19px">  Determining projects to restore...</div>
<div class="lg" style="top:137.19px">  Restored /tmp/windmill/wk-default-89p2b-I0Y5P/0193c111-c585-8a98-7a1b-3a05288f365b/Main.csproj</div>
<div class="lg" style="top:167.19px">/tmp/windmill/wk-default-89p2b-I0Y5P/0193c111-c585-8a98-7a1b-3a05288f365b/Main.csproj</div>
<div class="lg" style="top:197.19px">  Main -&gt; /tmp/windmill/wk-default-89p2b-I0Y5P/0193c111-c585-8a98-7a1b-3a05288f365b/bin</div>
<div class="lg" style="top:227.19px">  Main -&gt; /tmp/windmill/wk-default-89p2b-I0Y5P/0193c111-c585-8a98-7a1b-3a05288f365b/out</div>
<div class="lg" style="top:317.19px">wrote cached binary: /tmp/windmill/cache/csharp/f36cb7bf86eb55175511f8d4a2b3c</div>
<div class="lg" style="top:407.19px">--- C# CODE EXECUTION ---</div>
<div class="lg" style="top:497.19px">Hello, World!</div>
<div class="lg" style="top:527.19px">Your chosen words are pluralized here:</div>
</div>
<svg style="left:2298.75px;top:641.75px;width:26.5px;height:26.5px;" viewBox="0 0 24 24" fill="none" stroke="#f3f4f6" stroke-width="2" stroke-linecap="round" stroke-linejoin="round"><path d="M21 15v4a2 2 0 0 1-2 2H5a2 2 0 0 1-2-2v-4"/><polyline points="7 10 12 15 17 10"/><line x1="12" x2="12" y1="15" y2="3"/></svg>
<svg style="left:2340.00px;top:646.00px;width:23px;height:23px;" viewBox="0 0 24 24" fill="none" stroke="#f3f4f6" stroke-width="2.2" stroke-linecap="round" stroke-linejoin="round"><path d="m21 21-6-6m6 6v-4.8m0 4.8h-4.8"/><path d="M3 16.2V21m0 0h4.8M3 21l6-6"/><path d="M21 7.8V3m0 0h-4.8M21 3l-6 6"/><path d="M3 7.8V3m0 0h4.8M3 3l6 6"/></svg>
<span class="t" id="autoscroll" style="left:2379.00px;top:642.78px;font-size:24px;line-height:26.81px;color:#a3a9b3;font-weight:400;font-family:'Liberation Sans', sans-serif;letter-spacing:-0.050px;white-space:pre;">Auto scroll</span>
<svg style="left:2509.00px;top:645.00px;width:24px;height:24px;" viewBox="0 0 24 24" fill="none" stroke="#ffffff" stroke-width="3.2" stroke-linecap="round" stroke-linejoin="round"><path d="M20 6 9 17l-5-5"/></svg>
<div style="left:1573px;top:1176px;width:272px;height:10px;background:#a3a9b3;border-radius:5px"></div>
<div style="left:2552px;top:718px;width:6px;height:334px;background:#a3a9b3;border-radius:3px"></div>
<div style="left:2551px;top:1176px;width:9px;height:9px;background:#ffffff"></div>
<div style="left:1573px;top:1185px;width:987px;height:2px;background:#3b4d64"></div>
<div style="left:1573px;top:1187px;width:987px;height:104px;background:#2e3440"></div>
<svg style="left:2375.00px;top:1195.00px;width:26px;height:26px;" viewBox="0 0 24 24" fill="none" stroke="#d1d5db" stroke-width="2" stroke-linecap="round" stroke-linejoin="round"><path d="M21 15v4a2 2 0 0 1-2 2H5a2 2 0 0 1-2-2v-4"/><polyline points="7 10 12 15 17 10"/><line x1="12" x2="12" y1="15" y2="3"/></svg>
<svg style="left:2419.20px;top:1194.20px;width:27.6px;height:27.6px;" viewBox="0 0 24 24" fill="none" stroke="#d1d5db" stroke-width="2" stroke-linecap="round" stroke-linejoin="round"><circle cx="12" cy="12" r="10"/><path d="M12 16v-4"/><path d="M12 8h.01"/></svg>
<svg style="left:2465.50px;top:1195.00px;width:26px;height:26px;" viewBox="0 0 24 24" fill="none" stroke="#d1d5db" stroke-width="2" stroke-linecap="round" stroke-linejoin="round"><rect width="8" height="4" x="8" y="2" rx="1" ry="1"/><path d="M8 4H6a2 2 0 0 0-2 2v14a2 2 0 0 0 2 2h12a2 2 0 0 0 2-2v-2"/><path d="M16 4h2a2 2 0 0 1 2 2v4"/><path d="M21 14H11"/><path d="m15 10-4 4 4 4"/></svg>
<svg style="left:2510.00px;top:1195.00px;width:26px;height:26px;" viewBox="0 0 24 24" fill="none" stroke="#d1d5db" stroke-width="2" stroke-linecap="round" stroke-linejoin="round"><path d="m21 21-6-6m6 6v-4.8m0 4.8h-4.8"/><path d="M3 16.2V21m0 0h4.8M3 21l6-6"/><path d="M21 7.8V3m0 0h-4.8M21 3l-6 6"/><path d="M3 7.8V3m0 0h4.8M3 3l6 6"/></svg>
<div style="left:2551px;top:1187px;width:9px;height:66px;background:#a3a9b3;border-radius:4.5px"></div>
<div class="lg" style="left:1588px;top:1222.5px;font-size:21px">2024-12-10T17:29:51.6021076Z</div>
<div style="left:1573px;top:1187px;width:978px;height:90px;overflow:hidden">
<span class="t" style="left:39px;top:80.18px;font-size:24px;line-height:27px;color:#f3f4f6;font-weight:700;font-family:'Liberation Sans', sans-serif;white-space:pre">Copy</span>
<svg style="left:108.70px;top:82.00px;width:22.6px;height:22.6px" viewBox="0 0 24 24" fill="none" stroke="#f3f4f6" stroke-width="2.2" stroke-linecap="round" stroke-linejoin="round"><rect width="8" height="4" x="8" y="2" rx="1" ry="1"/><path d="M16 4h2a2 2 0 0 1 2 2v14a2 2 0 0 1-2 2H6a2 2 0 0 1-2-2V6a2 2 0 0 1 2-2h2"/></svg>
</div>
</body></html>
